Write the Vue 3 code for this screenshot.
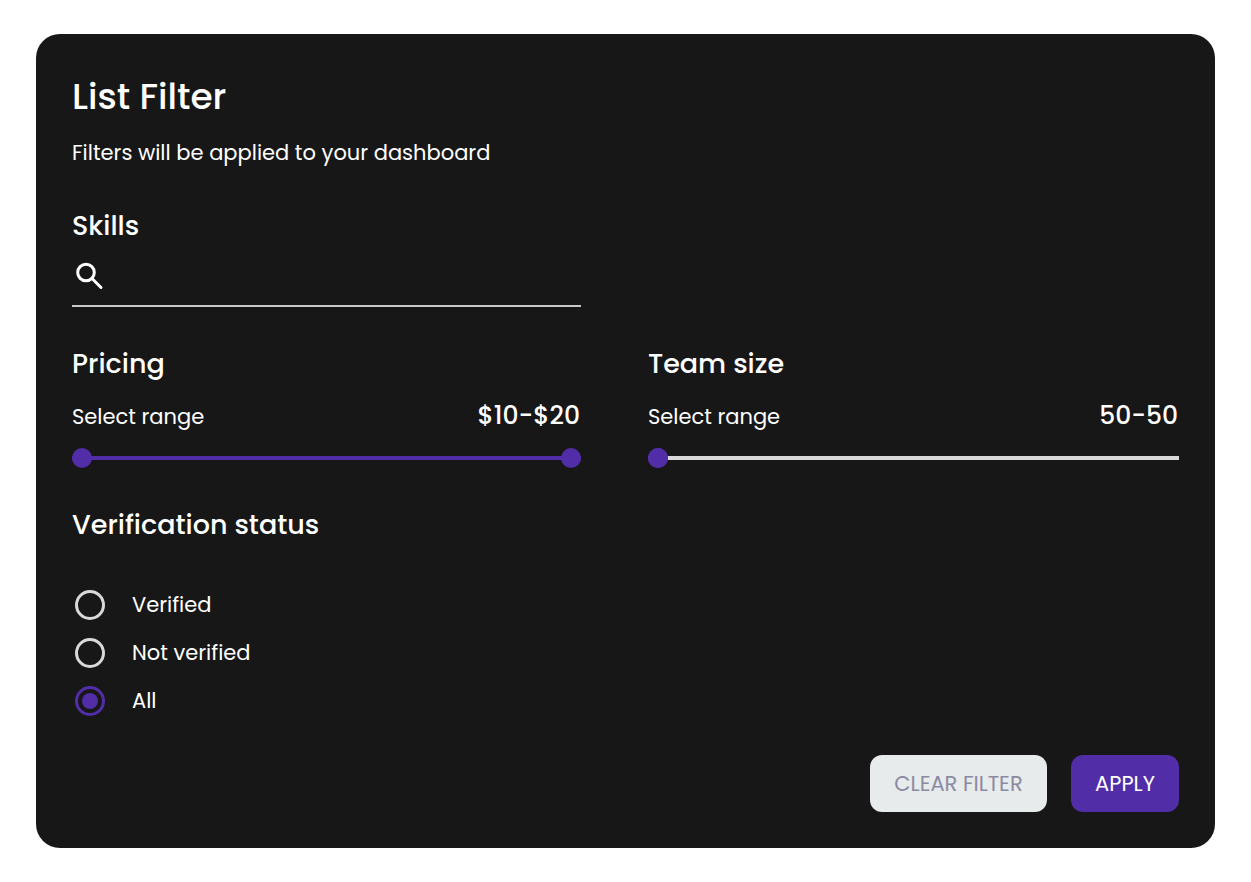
<script setup>
import { computed, reactive, ref } from 'vue'

const search = ref('')
const status = ref('all')
const options = [
  { value: 'verified', label: 'Verified' },
  { value: 'not-verified', label: 'Not verified' },
  { value: 'all', label: 'All' },
]

const pricing = reactive({ min: 10, max: 20, low: 10, high: 20 })
const team = reactive({ min: 50, max: 500, low: 50, high: 50 })

const fill = (r) => {
  const span = r.max - r.min
  return {
    left: `${((r.low - r.min) / span) * 100}%`,
    right: `${((r.max - r.high) / span) * 100}%`,
  }
}
const pricingFill = computed(() => fill(pricing))
const teamFill = computed(() => fill(team))

function keepOrder(r, moved) {
  if (r.low > r.high) {
    if (moved === 'low') r.low = r.high
    else r.high = r.low
  }
}

function clearFilter() {
  search.value = ''
  status.value = 'all'
  Object.assign(pricing, { low: 10, high: 20 })
  Object.assign(team, { low: 50, high: 50 })
}
</script>

<template>
  <main class="page">
    <form class="card" @submit.prevent>
      <h1 class="title">List Filter</h1>
      <p class="subtitle">Filters will be applied to your dashboard</p>

      <div class="columns">
        <section class="skills">
          <label class="heading" for="skills">Skills</label>
          <div class="search">
            <svg class="search-icon" viewBox="0 0 36 36" aria-hidden="true">
              <circle cx="14" cy="14.5" r="8.3" />
              <path d="M20 20.5 L29 29.5" />
            </svg>
            <input id="skills" v-model="search" class="search-input" type="text" />
          </div>
        </section>

        <section class="range-group">
          <h2 class="heading">Pricing</h2>
          <div class="range-row">
            <span class="text">Select range</span>
            <output class="value">${{ pricing.low }}-${{ pricing.high }}</output>
          </div>
          <div class="slider">
            <div class="rail"><div class="fill" :style="pricingFill"></div></div>
            <input v-model.number="pricing.low" type="range" :min="pricing.min" :max="pricing.max" aria-label="Minimum price" @input="keepOrder(pricing, 'low')" />
            <input v-model.number="pricing.high" type="range" :min="pricing.min" :max="pricing.max" aria-label="Maximum price" @input="keepOrder(pricing, 'high')" />
          </div>
        </section>

        <section class="range-group">
          <h2 class="heading">Team size</h2>
          <div class="range-row">
            <span class="text">Select range</span>
            <output class="value">{{ team.low }}-{{ team.high }}</output>
          </div>
          <div class="slider">
            <div class="rail"><div class="fill" :style="teamFill"></div></div>
            <input v-model.number="team.low" type="range" :min="team.min" :max="team.max" aria-label="Minimum team size" @input="keepOrder(team, 'low')" />
            <input v-model.number="team.high" type="range" :min="team.min" :max="team.max" aria-label="Maximum team size" @input="keepOrder(team, 'high')" />
          </div>
        </section>
      </div>

      <section class="status" role="radiogroup" aria-labelledby="status-title">
        <h2 id="status-title" class="heading">Verification status</h2>
        <div class="options">
          <label v-for="o in options" :key="o.value" class="option" :for="o.value">
            <input :id="o.value" v-model="status" class="radio" type="radio" name="status" :value="o.value" />
            <span class="text">{{ o.label }}</span>
          </label>
        </div>
      </section>

      <div class="actions">
        <button class="button clear" type="button" @click="clearFilter">CLEAR FILTER</button>
        <button class="button apply" type="submit">APPLY</button>
      </div>
    </form>
  </main>
</template>

<style>
body {
  background: #ffffff;
}
</style>

<style scoped>
.page,
.page * {
  box-sizing: border-box;
}
.page {
  padding: 34px 36px;
  font-family: Poppins, Inter, "Open Sans", sans-serif;
  color: #ffffff;
}
.card {
  padding: 36px;
  border-radius: 24px;
  background: #171717;
}
.title,
.subtitle,
.heading {
  margin: 0;
}
.title {
  font-size: 36px;
  line-height: 54px;
  font-weight: 500;
}
.subtitle {
  margin-top: 13px;
  font-size: 21px;
  line-height: 32px;
}
.heading {
  display: block;
  font-size: 27px;
  line-height: 42px;
  font-weight: 500;
}
.text {
  font-size: 21px;
  line-height: 32px;
}
.columns {
  display: grid;
  grid-template-columns: 23fr 24fr;
  column-gap: 67px;
  row-gap: 36px;
  margin-top: 36px;
}
.skills {
  grid-column: 1;
}
.range-group {
  grid-row: 2;
}
.search {
  display: flex;
  align-items: center;
  height: 60px;
  border-bottom: 2px solid #c9c9c9;
}
.search-icon {
  flex: none;
  width: 36px;
  height: 36px;
  fill: none;
  stroke: #ffffff;
  stroke-width: 3;
  stroke-linecap: round;
}
.search-input {
  flex: 1;
  min-width: 0;
  padding: 0 12px;
  border: 0;
  outline: 0;
  background: transparent;
  color: inherit;
  font: inherit;
  font-size: 21px;
}
.range-row {
  display: flex;
  justify-content: space-between;
  align-items: baseline;
  margin-top: 10px;
  padding-right: 1px;
}
.value {
  font-size: 25px;
  line-height: 42px;
  font-weight: 500;
}
.slider {
  display: grid;
  align-items: center;
  position: relative;
  height: 20px;
  margin-top: 11px;
}
.rail,
.slider input {
  grid-area: 1 / 1;
}
.rail {
  position: relative;
  height: 4px;
  background: #d9d9d9;
}
.fill {
  position: absolute;
  top: 0;
  bottom: 0;
  background: #512da8;
}
.slider input {
  position: relative;
  appearance: none;
  width: 100%;
  height: 20px;
  margin: 0;
  background: transparent;
  pointer-events: none;
}
.slider input::-webkit-slider-thumb {
  appearance: none;
  width: 20px;
  height: 20px;
  border: 0;
  border-radius: 50%;
  background: #512da8;
  pointer-events: auto;
  cursor: pointer;
}
.status {
  margin-top: 36px;
}
.options {
  margin-top: 35px;
}
.option {
  display: flex;
  align-items: center;
  gap: 27px;
  height: 48px;
  padding-left: 3px;
}
.radio {
  appearance: none;
  flex: none;
  display: grid;
  place-items: center;
  width: 30px;
  height: 30px;
  margin: 0;
  border: 3px solid #d9d9d9;
  border-radius: 50%;
}
.radio:checked {
  border-color: #512da8;
}
.radio:checked::before {
  content: "";
  width: 16px;
  height: 16px;
  border-radius: 50%;
  background: #512da8;
}
.actions {
  display: flex;
  justify-content: flex-end;
  gap: 24px;
  margin-top: 30px;
}
.button {
  height: 57px;
  padding: 0 23px;
  border: 0;
  border-radius: 12px;
  font: inherit;
  font-size: 21px;
  white-space: nowrap;
  cursor: pointer;
}
.clear {
  min-width: 177px;
  background: #e8ebeb;
  color: #8a8aa3;
}
.apply {
  min-width: 108px;
  background: #512da8;
  color: #ffffff;
}
</style>
